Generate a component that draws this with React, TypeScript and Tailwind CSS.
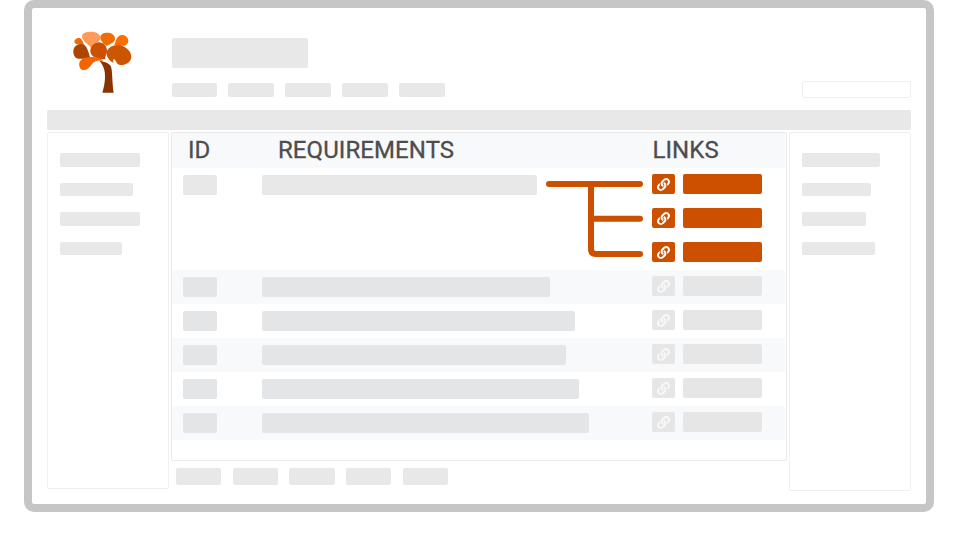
import { FaLink } from "react-icons/fa";

const navPills = [0, 1, 2, 3, 4];
const leftPills = ["w-[80px]", "w-[73px]", "w-[80px]", "w-[62px]"];
const rightPills = ["w-[78px]", "w-[69px]", "w-[64px]", "w-[73px]"];
const rows = [
  { width: "w-[288px]", bg: "bg-[#f8f9fb]" },
  { width: "w-[313px]", bg: "bg-white" },
  { width: "w-[304px]", bg: "bg-[#f8f9fb]" },
  { width: "w-[317px]", bg: "bg-white" },
  { width: "w-[327px]", bg: "bg-[#f8f9fb]" },
];

function TreeLogo() {
  return (
    <svg width="64" height="65" viewBox="60 30 192 195">
      <path fill="#ff9a5a" d="M124 84C114 72 96 64 96 49C96 38 110 35 124 35C140 35 151 42 151 53C151 66 132 70 124 84Z" />
      <path fill="#f26a00" d="M170 78C160 72 151 62 151 52C151 42 162 38 172 38C186 38 195 46 195 56C195 68 180 70 170 78Z" />
      <path fill="#ff6d00" d="M192 76C198 68 198 46 215 45C227 45 235 53 235 62C235 74 222 79 212 77C204 76 198 76 192 76Z" />
      <path fill="#f26a00" d="M102 74C92 72 80 76 74 68C71 60 80 53 88 54C96 56 99 66 102 74Z" />
      <path fill="#ab4500" d="M122 118C108 112 96 118 84 116C74 114 69 102 70 92C71 78 84 71 96 72C112 74 116 100 122 118Z" />
      <path fill="#cc5000" d="M166 118C146 118 121 112 121 93C121 78 134 67 147 67C161 67 171 79 171 93C171 104 164 110 166 118Z" />
      <path fill="#cc5500" d="M190 128C178 122 169 110 170 98C171 84 188 75 203 75C224 76 244 92 244 110C244 127 224 137 210 135C198 133 200 122 192 118C188 118 190 124 190 128Z" />
      <path fill="#f56200" d="M160 124C146 118 134 122 126 132C118 144 108 152 98 150C88 148 85 132 90 124C98 112 120 110 134 112C146 114 155 117 160 124Z" />
      <path fill="#8a3300" d="M157 218C163 200 168 172 163 150C160 138 154 128 148 122C160 124 178 128 183 140C188 155 186 190 191 218Z" />
    </svg>
  );
}

function LinkBox({ active }: { active: boolean }) {
  return (
    <div className={`flex h-5 w-[23px] items-center justify-center rounded-[2px] text-[13px] ${active ? "bg-[#cc5000] text-white" : "bg-[#e6e6e6] text-[#f8f8f8]"}`}>
      <FaLink />
    </div>
  );
}

function SidePanel({ pills, className }: { pills: string[]; className: string }) {
  return (
    <aside className={`flex flex-col gap-[16px] rounded-[2px] border border-[#efefef] pl-[12px] pt-[20px] ${className}`}>
      {pills.map((w, i) => (
        <div key={i} className={`h-[13.5px] rounded-[2px] bg-[#e8e8e8] ${w}`} />
      ))}
    </aside>
  );
}

export default function App() {
  return (
    <div className="h-[540px] w-[958px] bg-white font-['Roboto',sans-serif]">
      <div className="ml-[24px] h-[512px] w-[910px] rounded-[10px] border-8 border-[#c6c6c6] pl-[15px] pr-[15px]">
        <header className="flex h-[102px]">
          <div className="ml-[23px] w-[101.5px] pt-[22px]">
            <TreeLogo />
          </div>
          <div className="flex-1 pt-[30px]">
            <div className="h-[30px] w-[136.5px] rounded-[2px] bg-[#e8e8e8]" />
            <div className="mt-[13px] flex items-center">
              <div className="flex gap-[11.4px]">
                {navPills.map((i) => (
                  <div key={i} className="h-[14px] w-[45.5px] rounded-[2px] bg-[#e8e8e8]" />
                ))}
              </div>
              <div className="ml-auto h-[17px] w-[109px] rounded-[2px] border border-[#efefef]" />
            </div>
          </div>
        </header>

        <div className="h-5 rounded-[2px] bg-[#e8e8e8]" />

        <div className="mt-[2px] flex gap-[2px]">
          <SidePanel pills={leftPills} className="h-[357px] w-[122px]" />

          <div className="w-[616px]">
            <section className="h-[329px] rounded-[2px] border border-[#e9e9e9] pr-[1px]">
              <div className="flex h-[35px] items-center bg-[#f8f9fb] pb-[2px] text-[24px] tracking-[0.08px] text-[#4d4d4d] [-webkit-text-stroke:0.3px_#4d4d4d]">
                <span className="ml-[16px] w-[90px]">ID</span>
                <span className="w-[374.5px]">REQUIREMENTS</span>
                <span>LINKS</span>
              </div>

              <div className="relative h-[102px] pl-[11px] pt-[6px]">
                <div className="flex">
                  <div className="mt-[1px] h-5 w-[34px] rounded-[2px] bg-[#e8e8e8]" />
                  <div className="ml-[45px] mt-[1px] h-5 w-[275px] rounded-[2px] bg-[#e8e8e8]" />
                  <div className="ml-[115px] flex flex-col gap-[14px]">
                    {[0, 1, 2].map((i) => (
                      <div key={i} className="flex gap-2">
                        <LinkBox active />
                        <div className="h-5 w-[79px] rounded-[2px] bg-[#cc5000]" />
                      </div>
                    ))}
                  </div>
                </div>
                <svg className="absolute left-[370px] top-[10px]" width="104" height="80" viewBox="542 178 104 80" fill="none" stroke="#cc5000" strokeWidth="6" strokeLinecap="round">
                  <path d="M549 184H640" />
                  <path d="M591 184V249Q591 254 596 254H640" />
                  <path d="M591 218.7H640" />
                </svg>
              </div>

              {rows.map((row, i) => (
                <div key={i} className={`flex h-[34px] pl-[11px] pt-[6px] ${row.bg}`}>
                  <div className="mt-[1px] h-5 w-[34px] rounded-[2px] bg-[#e4e5e7]" />
                  <div className="ml-[45px] w-[390px]">
                    <div className={`mt-[1px] h-5 rounded-[2px] bg-[#e4e5e7] ${row.width}`} />
                  </div>
                  <LinkBox active={false} />
                  <div className="ml-2 h-5 w-[79px] rounded-[2px] bg-[#e6e6e6]" />
                </div>
              ))}
            </section>

            <div className="ml-[5px] mt-[7px] flex gap-[11.3px]">
              {navPills.map((i) => (
                <div key={i} className="h-[17px] w-[45.4px] rounded-[2px] bg-[#e8e8e8]" />
              ))}
            </div>
          </div>

          <SidePanel pills={rightPills} className="h-[359px] w-[122px]" />
        </div>
      </div>
    </div>
  );
}
